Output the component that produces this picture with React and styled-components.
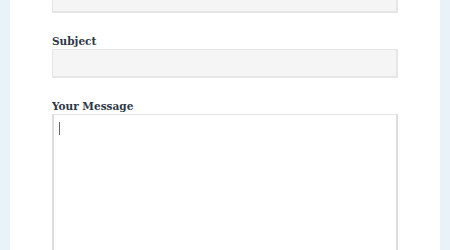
import React from "react"
import styled, { createGlobalStyle } from "styled-components"

const GlobalStyle = createGlobalStyle`
  html, body {
    margin: 0;
    padding: 0;
    background: #e9f1f9;
  }
`

const App = () => {
  return (
    <>
      <GlobalStyle />
      <Page>
        <Card>
          <Field>
            <Input type="text" />
          </Field>
          <Field>
            <Label>Subject</Label>
            <Input type="text" />
          </Field>
          <Field>
            <Label>Your Message</Label>
            <MessageBox>
              <Message />
              <Caret />
            </MessageBox>
          </Field>
        </Card>
      </Page>
    </>
  )
}

const Page = styled.div`
  height: 250px;
  padding: 0 10px;
  overflow: hidden;
  box-sizing: border-box;
`

const Card = styled.div`
  background: #ffffff;
  height: 300px;
  padding: 0 42px;
  margin-top: -16px;
  display: flex;
  flex-direction: column;
  gap: 21px;
`

const Field = styled.div`
  display: flex;
  flex-direction: column;
  width: 346px;
`

const Label = styled.label`
  font-family: "DejaVu Serif Condensed", "Liberation Serif", serif;
  font-stretch: condensed;
  font-weight: bold;
  font-size: 11.7px;
  color: #2e3746;
  line-height: 15px;
  margin-bottom: 0;
`

const Input = styled.input`
  box-sizing: border-box;
  height: 29px;
  width: 100%;
  background: #f5f5f5;
  border: 1px solid #e6e6e6;
  border-right-width: 2px;
  border-bottom-width: 2px;
  outline: none;
  margin: 0;
`

const MessageBox = styled.div`
  position: relative;
`

const Message = styled.textarea`
  display: block;
  box-sizing: border-box;
  height: 200px;
  width: 100%;
  background: #ffffff;
  border: 1px solid #e6e6e6;
  border-left: 2px solid #dddddd;
  border-right: 2px solid #dddddd;
  outline: none;
  resize: none;
  margin: 0;
  padding: 6px 5px;
  font-family: "DejaVu Sans", sans-serif;
  font-size: 13px;
`

const Caret = styled.span`
  position: absolute;
  left: 7px;
  top: 8px;
  width: 1px;
  height: 13px;
  background: #6a6a6a;
`

export default App
